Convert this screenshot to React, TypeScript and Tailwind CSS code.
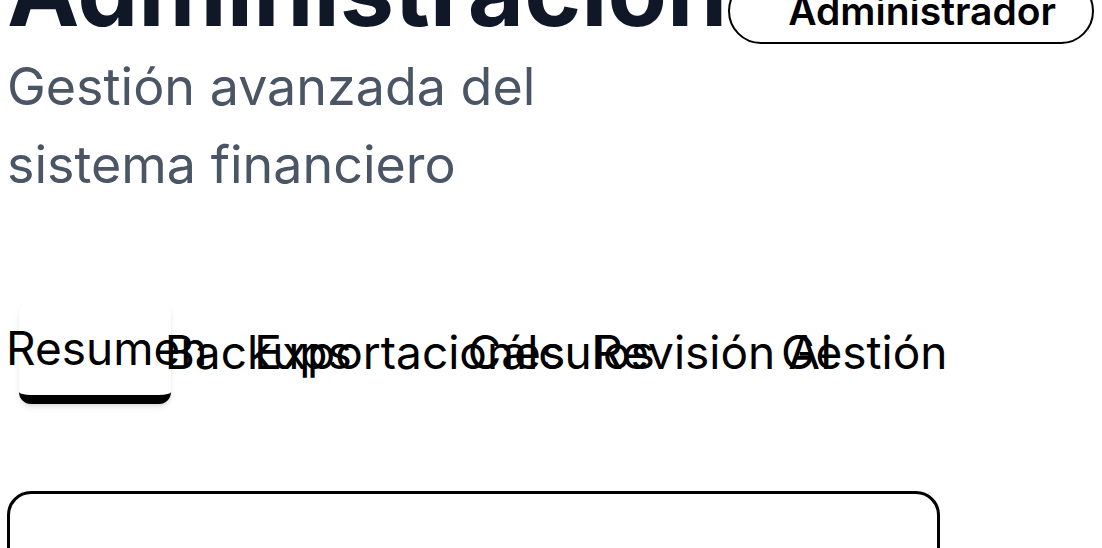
import React from 'react';

const tabs = ['Resumen', 'Backups', 'Exportaciones', 'Cálculos', 'Revisión AI', 'Gestión'];

export default function App() {
    return (
        <div className="min-h-screen bg-white overflow-hidden" style={{ fontFamily: 'Inter, "Noto Sans", sans-serif' }}>
            <div className="-mt-[58px] pl-[7px] pr-2">
                <div className="flex justify-between items-start">
                    <div className="flex flex-col">
                        <h1 className="text-[97px] leading-none font-bold text-gray-900 whitespace-nowrap">Administración</h1>
                        <p className="mt-[9px] max-w-[560px] text-[52px] leading-[78px] text-gray-600">
                            Gestión avanzada del sistema financiero
                        </p>
                    </div>
                    <div className="mt-[36px] rounded-full border-2 border-black pl-[58px] pr-[36px] py-[11px] text-[39px] leading-10 font-semibold text-black whitespace-nowrap">
                        Administrador
                    </div>
                </div>

                <div className="mt-[85px] w-[933px] p-3 grid grid-cols-6">
                    {tabs.map((tab, i) => (
                        <button
                            key={tab}
                            className={
                                i === 0
                                    ? 'h-[103px] flex items-center justify-center gap-2 whitespace-nowrap text-[46px] text-black bg-white rounded-xl shadow-md border-b-[9px] border-black'
                                    : 'h-[103px] flex items-center justify-center gap-2 whitespace-nowrap text-[46px] text-black'
                            }
                        >
                            <span className="w-4 h-4 shrink-0"></span>
                            {tab}
                        </button>
                    ))}
                </div>

                <div className="mt-[75px] w-[933px] h-[300px] rounded-3xl border-[3px] border-black"></div>
            </div>
        </div>
    );
}
